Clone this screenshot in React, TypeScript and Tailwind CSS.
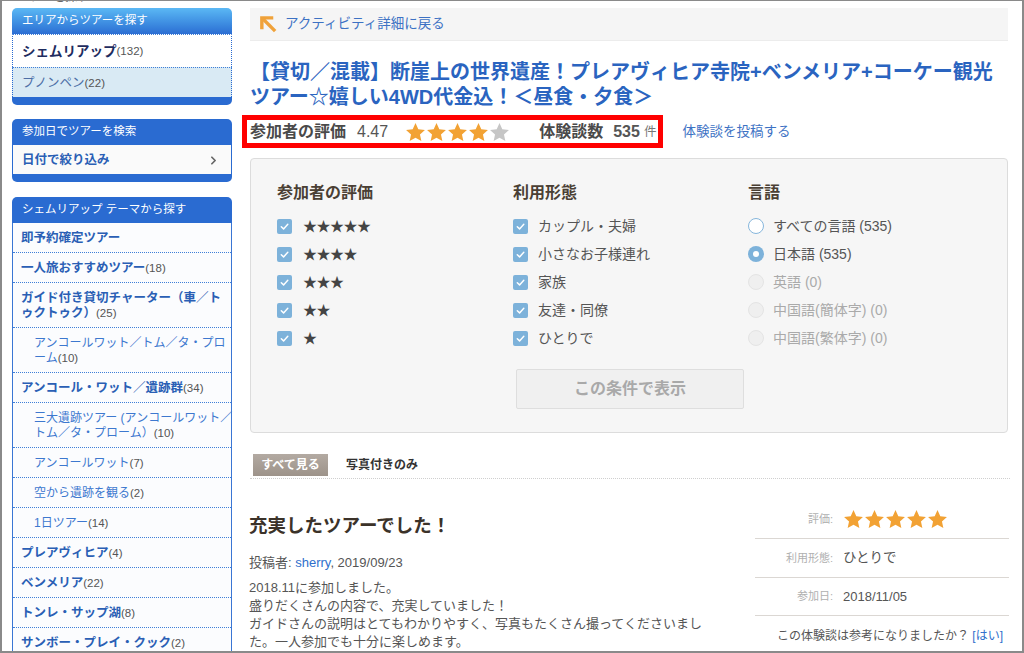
import React from "react";
import { ChevronRight } from "lucide-react";

type Theme = { lines: string[]; count?: string; sub?: boolean };

const themes: Theme[] = [
  { lines: ["即予約確定ツアー"] },
  { lines: ["一人旅おすすめツアー"], count: "18" },
  { lines: ["ガイド付き貸切チャーター（車／ト", "ゥクトゥク）"], count: "25" },
  { lines: ["アンコールワット／トム／タ・プロ", "ーム"], count: "10", sub: true },
  { lines: ["アンコール・ワット／遺跡群"], count: "34" },
  { lines: ["三大遺跡ツアー (アンコールワット／", "トム／タ・プローム）"], count: "10", sub: true },
  { lines: ["アンコールワット"], count: "7", sub: true },
  { lines: ["空から遺跡を観る"], count: "2", sub: true },
  { lines: ["1日ツアー"], count: "14", sub: true },
  { lines: ["プレアヴィヒア"], count: "4" },
  { lines: ["ベンメリア"], count: "22" },
  { lines: ["トンレ・サップ湖"], count: "8" },
  { lines: ["サンボー・プレイ・クック"], count: "2" },
];

const Star = ({ fill, size = 21 }: { fill: string; size?: number }) => (
  <svg width={size} height={size} viewBox="0 0 24 24" className="shrink-0">
    <polygon
      points="12,1.2 15.2,8.3 22.8,9.1 17.1,14.3 18.7,21.8 12,17.9 5.3,21.8 6.9,14.3 1.2,9.1 8.8,8.3"
      fill={fill}
    />
  </svg>
);

const Count = ({ n }: { n: string }) => (
  <span className="text-[11.5px] font-normal text-[#555]">({n})</span>
);

const Check = () => (
  <span className="flex h-[15px] w-[15px] shrink-0 items-center justify-center rounded-[2px] bg-[#7db2da]">
    <svg width="11" height="11" viewBox="0 0 12 12">
      <polyline
        points="2.5,6.2 5,8.6 9.6,3.6"
        fill="none"
        stroke="#fff"
        strokeWidth="1.6"
        strokeLinecap="round"
        strokeLinejoin="round"
      />
    </svg>
  </span>
);

const Radio = ({ state }: { state: "off" | "on" | "disabled" }) => {
  if (state === "on")
    return (
      <span className="flex h-[16px] w-[16px] shrink-0 items-center justify-center rounded-full bg-[#7db2da]">
        <span className="h-[6px] w-[6px] rounded-full bg-white" />
      </span>
    );
  if (state === "off")
    return <span className="h-[16px] w-[16px] shrink-0 rounded-full border border-[#86b6dc] bg-white" />;
  return <span className="h-[16px] w-[16px] shrink-0 rounded-full border border-[#e4e4e4] bg-[#efefef]" />;
};

function Sidebar() {
  return (
    <aside className="ml-[10px] w-[220px] shrink-0">
      <div className="h-[5px] overflow-hidden">
        <div className="-mt-[11px] pl-[6px] text-[12px] leading-[14px] text-[#666]">ツアーを探す</div>
      </div>

      {/* area box */}
      <div className="mt-[2px]">
        <div className="flex h-[26px] items-center rounded-t-[5px] bg-linear-to-b from-[#5bb8f4] to-[#2c6ed3] pl-[10px] text-[11.5px] text-white">
          エリアからツアーを探す
        </div>
        <div className="flex h-[33px] items-center border-x border-t border-x-[#2a6bd1] border-t-[#3f7fd8] border-dotted bg-white pl-[9px] pt-[2px]">
          <span className="text-[13.5px] font-bold text-[#1e2c5f]">シェムリアップ</span>
          <Count n="132" />
        </div>
        <div className="flex h-[30px] items-center border-x border-t border-x-[#2a6bd1] border-t-[#3f7fd8] border-dotted bg-[#d9eaf4] pl-[9px] pt-[2px]">
          <span className="text-[12.5px] text-[#4d6ea6]">プノンペン</span>
          <Count n="22" />
        </div>
        <div className="h-[8px] rounded-b-[5px] bg-[#2a6bd1]" />
      </div>

      {/* date box */}
      <div className="mt-[14px]">
        <div className="flex h-[26px] items-center rounded-t-[5px] bg-[#2a6bd1] pl-[10px] text-[11.5px] text-white">
          参加日でツアーを検索
        </div>
        <div className="flex h-[29px] items-center justify-between border-x border-[#2a6bd1] bg-[#fafafa] pl-[9px] pr-[11px] pt-[2px]">
          <span className="text-[12.5px] font-bold text-[#2a5fb5]">日付で絞り込み</span>
          <ChevronRight size={13} strokeWidth={3.2} color="#666" />
        </div>
        <div className="h-[8px] rounded-b-[5px] bg-[#2a6bd1]" />
      </div>

      {/* theme box */}
      <div className="mt-[15px]">
        <div className="flex h-[26px] items-center rounded-t-[5px] bg-[#2a6bd1] pl-[10px] text-[11.5px] text-white">
          シェムリアップ テーマから探す
        </div>
        <div className="border-x border-[#3a76d4] bg-[#fbfcfe]">
          {themes.map((t, i) => (
            <div
              key={i}
              className={`border-b border-dotted border-[#3f7fd8] pb-[6px] pt-[8px] leading-[15px] ${
                t.sub ? "pl-[21px] text-[12px] text-[#3d78cf]" : "pl-[8px] text-[12.5px] font-bold text-[#2a5fb5]"
              }`}
            >
              {t.lines.map((l, j) => (
                <div key={j} className="whitespace-nowrap">
                  {l}
                  {j === t.lines.length - 1 && t.count ? <Count n={t.count} /> : null}
                </div>
              ))}
            </div>
          ))}
        </div>
      </div>
    </aside>
  );
}

const ratingRows = ["★★★★★", "★★★★", "★★★", "★★", "★"];
const styleRows = ["カップル・夫婦", "小さなお子様連れ", "家族", "友達・同僚", "ひとりで"];
const langRows: { label: string; state: "off" | "on" | "disabled" }[] = [
  { label: "すべての言語 (535)", state: "off" },
  { label: "日本語 (535)", state: "on" },
  { label: "英語 (0)", state: "disabled" },
  { label: "中国語(簡体字) (0)", state: "disabled" },
  { label: "中国語(繁体字) (0)", state: "disabled" },
];

function FilterPanel() {
  return (
    <div className="mt-[14px] w-[758px] rounded-[4px] border border-[#dcdcdc] bg-[#f6f6f6] pb-[23px] pl-[26px] pt-[24px]">
      <div className="grid grid-cols-[236px_235px_1fr]">
        <div>
          <div className="text-[16px] font-bold leading-[20px] text-[#4a3f34]">参加者の評価</div>
          <div className="mt-[9px]">
            {ratingRows.map((r) => (
              <div key={r} className="flex h-[28px] items-center gap-[11px]">
                <Check />
                <span className="text-[14px] tracking-[-0.5px] text-[#444]">{r}</span>
              </div>
            ))}
          </div>
        </div>
        <div>
          <div className="text-[16px] font-bold leading-[20px] text-[#4a3f34]">利用形態</div>
          <div className="mt-[9px]">
            {styleRows.map((r) => (
              <div key={r} className="flex h-[28px] items-center gap-[10px]">
                <Check />
                <span className="text-[14px] text-[#555]">{r}</span>
              </div>
            ))}
          </div>
        </div>
        <div>
          <div className="text-[16px] font-bold leading-[20px] text-[#4a3f34]">言語</div>
          <div className="mt-[9px]">
            {langRows.map((r) => (
              <div key={r.label} className="flex h-[28px] items-center gap-[9px]">
                <Radio state={r.state} />
                <span className={`text-[14px] ${r.state === "disabled" ? "text-[#aaa]" : "text-[#555]"}`}>
                  {r.label}
                </span>
              </div>
            ))}
          </div>
        </div>
      </div>
      <div className="mt-[17px] pl-[239px]">
        <div className="flex h-[40px] w-[228px] items-center justify-center rounded-[2px] border border-[#dedede] bg-[#f0f0f0] text-[16px] font-bold text-[#a9a9a9]">
          この条件で表示
        </div>
      </div>
    </div>
  );
}

function Review() {
  return (
    <div className="mt-[22px] flex w-[760px]">
      <div className="w-[476px] pt-[12px]">
        <h2 className="-ml-[1px] text-[18.5px] font-bold leading-[26px] text-[#3b3229]">充実したツアーでした！</h2>
        <div className="-ml-[1px] mt-[15px] text-[13px] leading-[18px] text-[#555]">
          投稿者: <span className="text-[#2f6fcc]">sherry</span>, 2019/09/23
        </div>
        <p className="-ml-[1px] mt-[7px] text-[13px] leading-[18px] text-[#555]">
          2018.11に参加しました。
          <br />
          盛りだくさんの内容で、充実していました！
          <br />
          ガイドさんの説明はとてもわかりやすく、写真もたくさん撮ってくださいました。一人参加でも十分に楽しめます。
        </p>
      </div>
      <div className="ml-[29px] w-[254px]">
        <div className="flex h-[38px] items-center border-b border-[#dbd7d3]">
          <span className="w-[78px] text-right text-[11px] text-[#b0b0b0]">評価:</span>
          <span className="ml-[10px] flex">
            {[0, 1, 2, 3, 4].map((i) => (
              <Star key={i} fill="#f2a234" size={21} />
            ))}
          </span>
        </div>
        <div className="flex h-[39px] items-center border-b border-[#dbd7d3]">
          <span className="w-[78px] text-right text-[11px] text-[#b0b0b0]">利用形態:</span>
          <span className="ml-[10px] text-[13.5px] text-[#555]">ひとりで</span>
        </div>
        <div className="flex h-[38px] items-center border-b border-[#dbd7d3]">
          <span className="w-[78px] text-right text-[11px] text-[#b0b0b0]">参加日:</span>
          <span className="ml-[10px] text-[13px] text-[#555]">2018/11/05</span>
        </div>
        <div className="mt-[12px] pr-[6px] text-right text-[12px] leading-[16px] text-[#555]">
          この体験談は参考になりましたか？ <span className="text-[#2f6fcc]">[はい]</span>
        </div>
      </div>
    </div>
  );
}

function Main() {
  return (
    <main className="ml-[18px] w-[760px] pt-[7px]">
      <div className="flex h-[33px] w-[758px] items-center border-b border-[#ececec] bg-[#f5f5f5] pl-[9px]">
        <svg width="19" height="19" viewBox="0 0 20 20" className="shrink-0">
          <path d="M3 15 V3 H15" fill="none" stroke="#f0a23a" strokeWidth="3.6" strokeLinecap="butt" strokeLinejoin="miter" />
          <path d="M4 4 L17 17" fill="none" stroke="#f0a23a" strokeWidth="3.6" />
        </svg>
        <span className="ml-[7px] text-[13.5px] text-[#3d72c4]">アクティビティ詳細に戻る</span>
      </div>

      <h1 className="mt-[19px] whitespace-nowrap text-[20px] font-bold leading-[24.5px] text-[#2a64c0]">
        【貸切／混載】断崖上の世界遺産！プレアヴィヒア寺院+ベンメリア+コーケー観光
        <br />
        ツアー☆嬉しい4WD代金込！＜昼食・夕食＞
      </h1>

      <div className="relative mt-[11px] flex h-[24px] items-center">
        <div className="pointer-events-none absolute -left-[8px] -top-[5px] h-[33px] w-[421px] border-[5px] border-[#ff0000]" />
        <span className="text-[16px] font-bold text-[#4a4a4a]">参加者の評価</span>
        <span className="ml-[11px] text-[16px] text-[#555]">4.47</span>
        <span className="ml-[17px] flex">
          {[0, 1, 2, 3].map((i) => (
            <Star key={i} fill="#f2a234" />
          ))}
          <Star fill="#c6c6c6" />
        </span>
        <span className="ml-[29px] text-[16px] font-bold text-[#4a4a4a]">体験談数</span>
        <span className="ml-[10px] text-[16px] font-bold text-[#555]">535</span>
        <span className="ml-[4px] text-[12.5px] text-[#777]">件</span>
        <span className="ml-[26px] text-[13.5px] text-[#3d72c4]">体験談を投稿する</span>
      </div>

      <FilterPanel />

      <div className="mt-[21px] flex h-[25px] items-start border-b border-dotted border-[#cfcfcf]">
        <div className="ml-[3px] flex h-[22px] w-[75px] items-center justify-center bg-linear-to-b from-[#b3aaa2] to-[#9d938a] text-[12px] font-bold text-white">
          すべて見る
        </div>
        <div className="ml-[18px] flex h-[22px] items-center text-[12px] font-bold text-[#333]">写真付きのみ</div>
      </div>

      <Review />
    </main>
  );
}

export default function App() {
  return (
    <div className="flex h-[653px] w-[1024px] overflow-hidden border-2 border-t border-[#8a8a8a] bg-white font-['Liberation_Sans','Noto_Sans_CJK_JP',sans-serif]">
      <Sidebar />
      <Main />
    </div>
  );
}
